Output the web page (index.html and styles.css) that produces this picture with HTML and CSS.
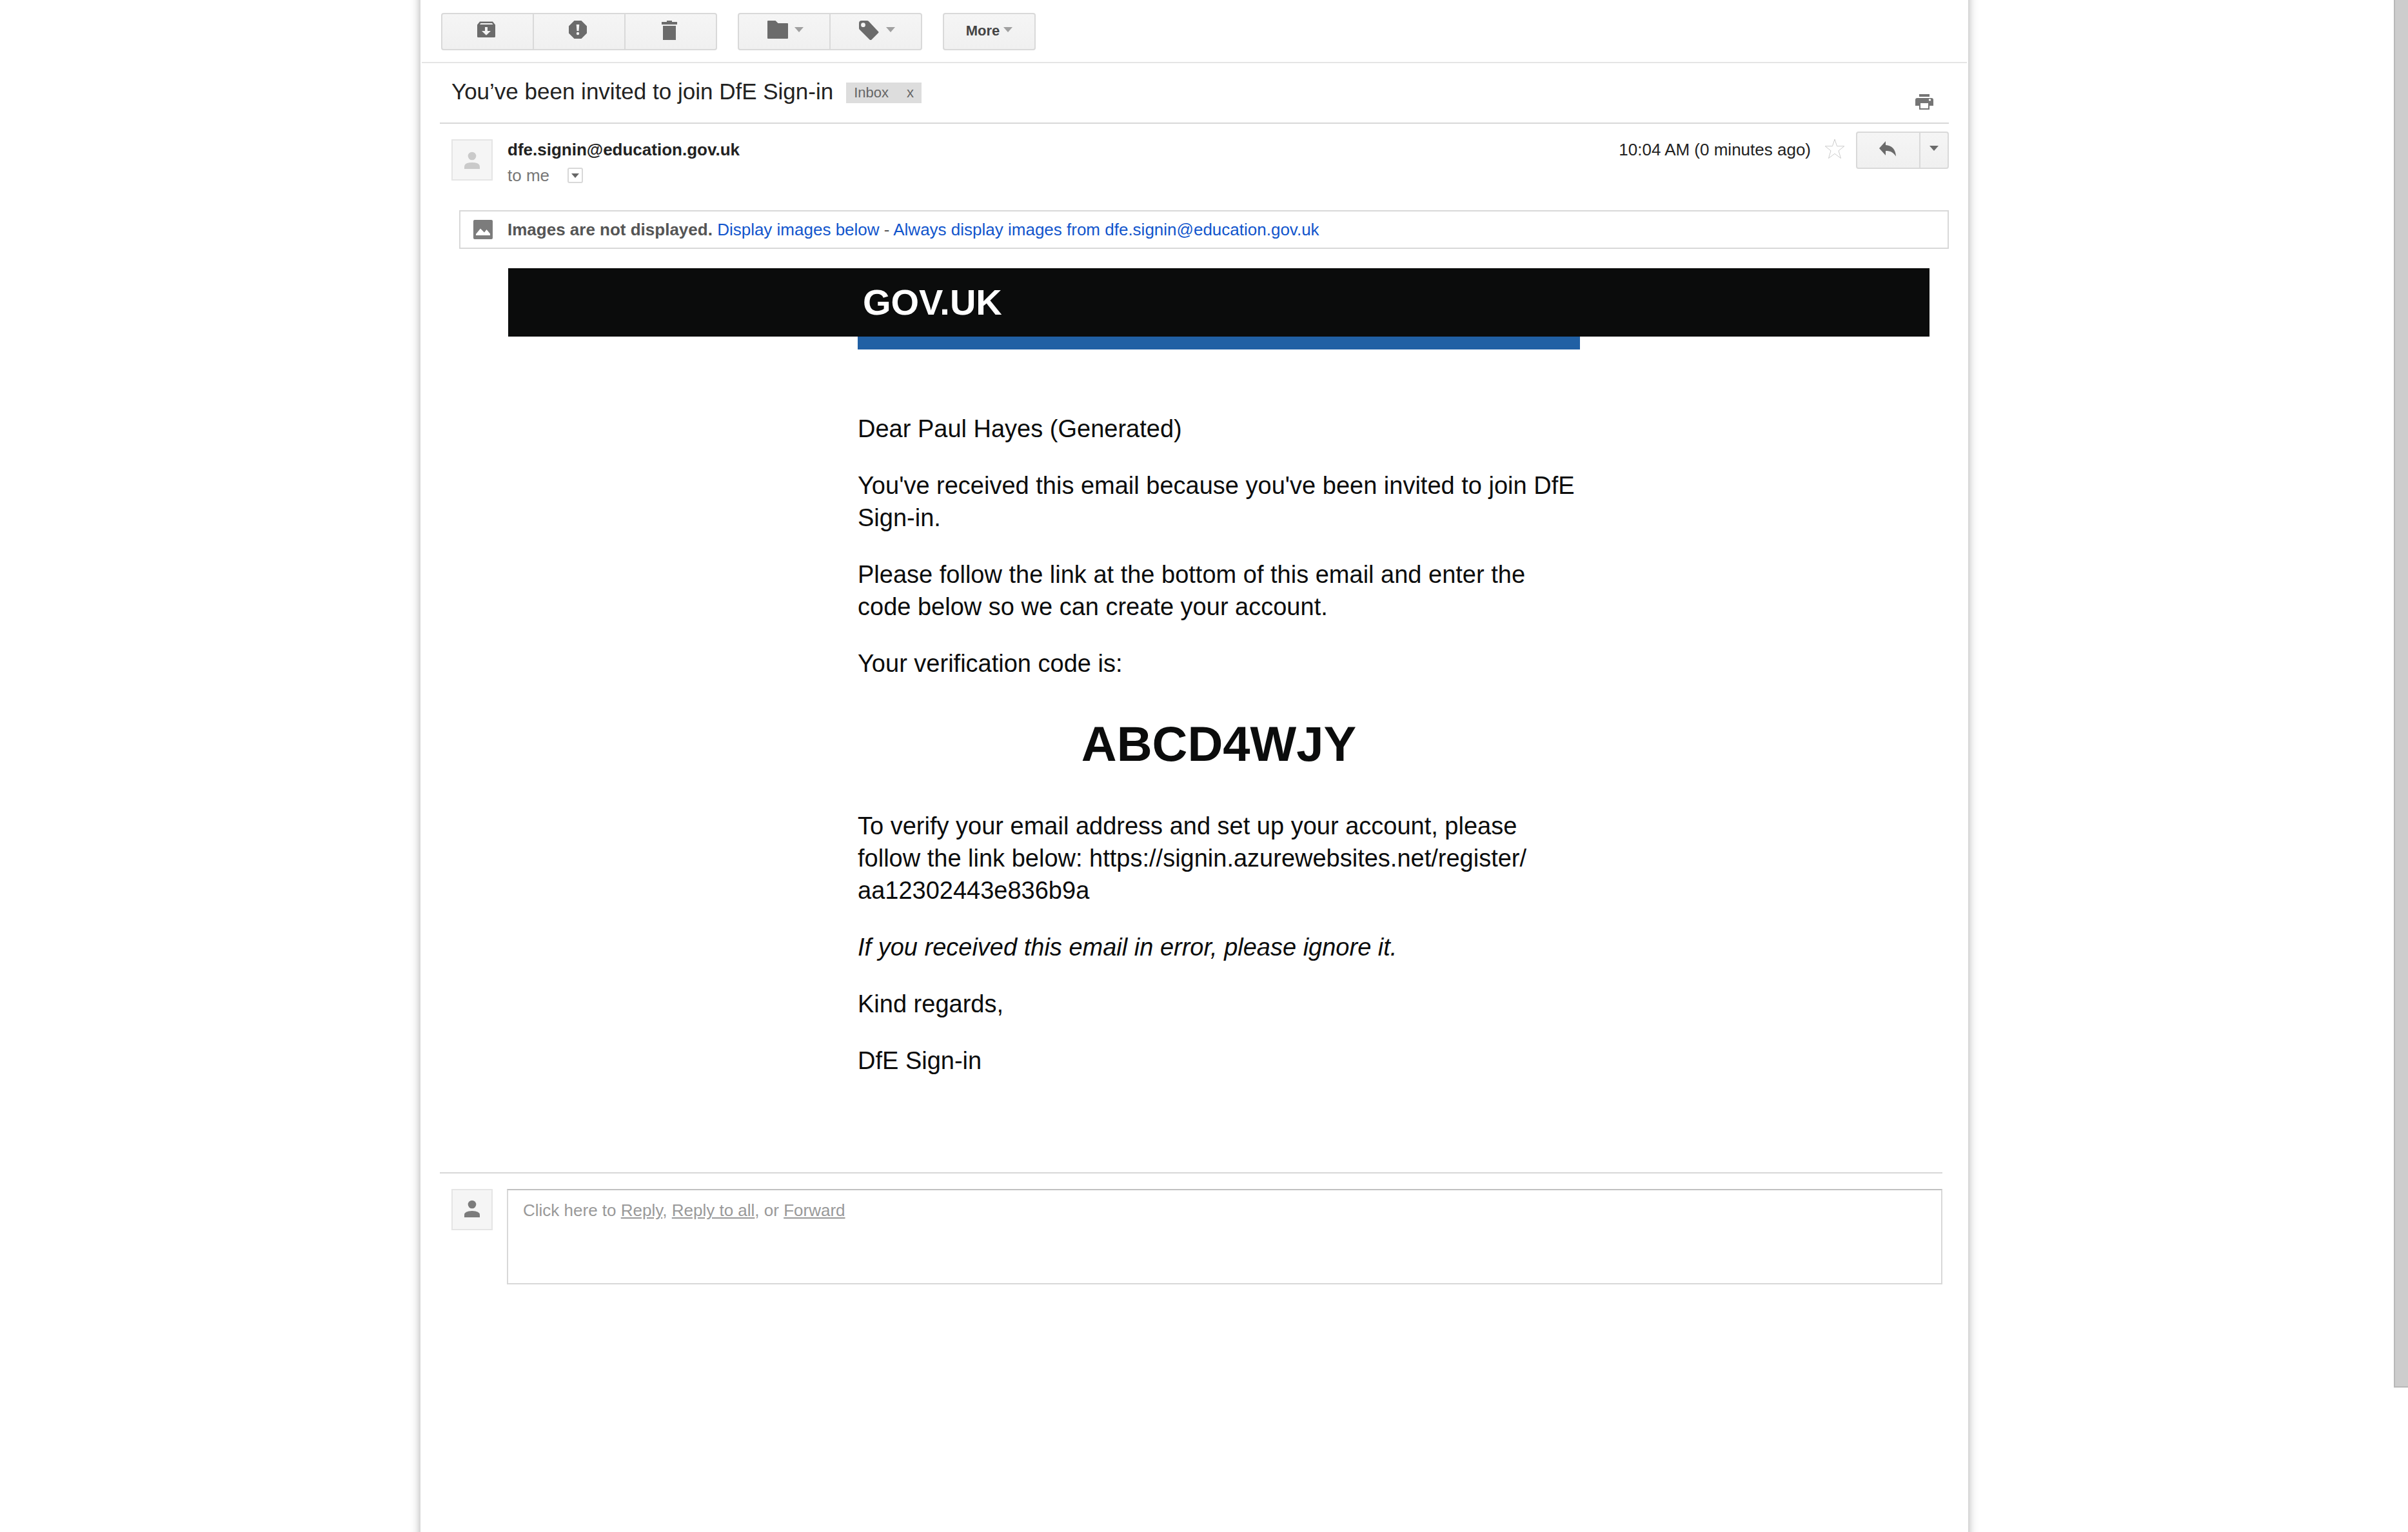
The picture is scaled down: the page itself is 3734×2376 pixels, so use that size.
FILE: index.html
```html
<!DOCTYPE html>
<html lang="en">
<head>
<meta charset="utf-8">
<title>You’ve been invited to join DfE Sign-in</title>
<link rel="stylesheet" href="styles.css">
</head>
<body>
<div class="page">
  <main class="panel">
    <div class="toolbar" role="toolbar" aria-label="Message actions">
      <div class="group">
        <button class="btn btn-icon" aria-label="Archive">
          <svg class="icon" viewBox="0 0 32 32"><path fill-rule="evenodd" d="M6 3.5H26L30 8.500V26.500Q30 28 28.500 28H3.500Q2 28 2 26.500V8.500ZM7.500 6L6 8H26.500L25 6ZM14 12V18H9L16 24.700L23 18H18V12Z"/></svg>
        </button>
        <button class="btn btn-icon" aria-label="Report spam">
          <svg class="icon" viewBox="0 0 32 32"><path fill-rule="evenodd" d="M10.500 2H21.500L30 10.500V21.500L21.500 30H10.500L2 21.500V10.500ZM13.700 8L14.500 18H17.500L18.300 8ZM16 19.800A2.200 2.200 0 1 0 16 24.200A2.200 2.200 0 1 0 16 19.800Z"/></svg>
        </button>
        <button class="btn btn-icon" aria-label="Delete">
          <svg class="icon" viewBox="0 0 32 32"><path d="M12 2H20V4H28V8H4V4H12ZM6 10H26V32H6Z"/></svg>
        </button>
      </div>
      <div class="group">
        <button class="btn btn-menu" aria-label="Move to">
          <svg class="icon" viewBox="0 0 32 32"><path d="M1 2H12.500L16.500 6H31Q32 6 32 7V29Q32 30 31 30H1Q0 30 0 29V3Q0 2 1 2Z"/></svg>
          <svg class="caret" viewBox="0 0 14 8"><path d="M0 0H14L7 8Z"/></svg>
        </button>
        <button class="btn btn-menu" aria-label="Labels">
          <svg class="icon" viewBox="0 0 32 32"><path fill-rule="evenodd" d="M4 2H12.500Q14 2 15 3L30 19Q31 20 30 21L19 32Q18 33 17 32L1 16Q0 15 0 13.500V6Q0 2 4 2ZM6.500 5.300A3.400 3.400 0 1 0 6.500 12.100A3.400 3.400 0 1 0 6.500 5.300Z"/></svg>
          <svg class="caret" viewBox="0 0 14 8"><path d="M0 0H14L7 8Z"/></svg>
        </button>
      </div>
      <button class="btn btn-more">More
        <svg class="caret" viewBox="0 0 14 8"><path d="M0 0H14L7 8Z"/></svg>
      </button>
    </div>

    <article class="thread">
      <header class="subject-row">
        <h1 class="subject">You’ve been invited to join DfE Sign-in</h1>
        <span class="label">Inbox <button class="label-remove" aria-label="Remove label Inbox">x</button></span>
        <button class="print" aria-label="Print">
          <svg class="print-icon" viewBox="0 0 28 24"><path fill-rule="evenodd" d="M6 0H22V4H6ZM3 6H25Q28 6 28 9V18H22V24H6V18H0V9Q0 6 3 6ZM8 14V22H20V14ZM22.500 7.200A1.700 1.700 0 1 0 22.500 10.600A1.700 1.700 0 1 0 22.500 7.200Z"/></svg>
        </button>
      </header>

      <div class="message-head">
        <svg class="avatar avatar-sender" viewBox="0 0 64 64"><rect class="avatar-frame" x="1" y="1" width="62" height="62"/><circle cx="32" cy="26" r="6.300"/><path d="M20 46V42.500Q20 36 32 36Q44 36 44 42.500V46Z"/></svg>
        <div class="sender">
          <strong class="sender-name">dfe.signin@education.gov.uk</strong>
          <div class="recipient">to me
            <button class="details" aria-label="Show details"><svg class="details-caret" viewBox="0 0 12 7"><path d="M0 0H12L6 7Z"/></svg></button>
          </div>
        </div>
        <time class="time">10:04 AM (0 minutes ago)</time>
        <button class="star" aria-label="Star">
          <svg class="star-icon" viewBox="0 0 32 32"><path d="M16 2L19.500 12.700H30.800L22 19.800L25.500 31.500L16 24.300L6.500 31.500L10 19.800L1.200 12.700H12.500Z"/></svg>
        </button>
        <div class="group">
          <button class="btn btn-reply" aria-label="Reply">
            <svg class="reply-icon" viewBox="0 0 26 24"><path d="M0 11L10 0V6C20 6.500 25.500 13 26 23.500C22 17.500 18 15 10 15V22Z"/></svg>
          </button>
          <button class="btn btn-reply-menu" aria-label="More reply options">
            <svg class="caret caret-dark" viewBox="0 0 14 8"><path d="M0 0H14L7 8Z"/></svg>
          </button>
        </div>
      </div>

      <div class="notice">
        <svg class="notice-icon" viewBox="0 0 30 30"><path fill-rule="evenodd" d="M2 0H28Q30 0 30 2V28Q30 30 28 30H2Q0 30 0 28V2Q0 0 2 0ZM4 24H26V21.500L20.500 15L17 19.500L11 13.500L4 22Z"/></svg>
        <p class="notice-text"><strong>Images are not displayed.</strong> <a href="#">Display images below</a> - <a href="#">Always display images from dfe.signin@education.gov.uk</a></p>
      </div>

      <section class="email">
        <div class="brand"><div class="brand-inner">GOV.UK</div></div>
        <div class="email-body">
          <p>Dear Paul Hayes (Generated)</p>
          <p>You've received this email because you've been invited to join DfE Sign-in.</p>
          <p>Please follow the link at the bottom of this email and enter the code below so we can create your account.</p>
          <p>Your verification code is:</p>
          <p class="code">ABCD4WJY</p>
          <p>To verify your email address and set up your account, please follow the link below: https://signin.azurewebsites.net/register/<wbr>aa12302443e836b9a</p>
          <p><em>If you received this email in error, please ignore it.</em></p>
          <p>Kind regards,</p>
          <p>DfE Sign-in</p>
        </div>
      </section>

      <footer class="reply-row">
        <svg class="avatar avatar-me" viewBox="0 0 64 64"><rect class="avatar-frame" x="1" y="1" width="62" height="62"/><circle cx="32" cy="24" r="6.300"/><path d="M20 44V40.500Q20 34 32 34Q44 34 44 40.500V44Z"/></svg>
        <div class="reply-box">Click here to <a href="#">Reply</a>, <a href="#">Reply to all</a>, or <a href="#">Forward</a></div>
      </footer>
    </article>
  </main>
  <div class="scroll-track"><div class="scroll-thumb"></div></div>
</div>
</body>
</html>
```

FILE: styles.css
```css
* { box-sizing: border-box; }

body {
  margin: 0;
  background: #fff;
  color: #222;
  font: 26px/40px "Liberation Sans", Arial, Helvetica, sans-serif;
}

h1, p { margin: 0; font-weight: normal; }

svg { display: block; flex: none; }

button {
  margin: 0;
  padding: 0;
  border: 0;
  background: none;
  color: inherit;
  font: inherit;
  cursor: pointer;
}

.page {
  display: flex;
  height: 100vh;
  overflow: hidden;
}

/* The panel runs past both window edges so its side shadow never fades */
.panel {
  flex: 0 1 2400px;
  min-height: calc(100vh + 80px);
  margin: -40px auto;
  padding-top: 40px;
  background: #fff;
  box-shadow: 0 0 14px rgba(0, 0, 0, 0.34);
}

/* Toolbar */
.toolbar {
  display: flex;
  gap: 32px;
  margin: 0 2px;
  padding: 20px 30px 18px;
  border-bottom: 2px solid #e5e5e5;
}

.group { display: flex; }

.btn {
  display: flex;
  align-items: center;
  justify-content: center;
  width: 144px;
  height: 58px;
  border: 2px solid #d9d9d9;
  border-radius: 4px;
  background: linear-gradient(#f5f5f5, #f0f0f0);
}

.group .btn:not(:first-child) {
  margin-left: -2px;
  border-top-left-radius: 0;
  border-bottom-left-radius: 0;
}

.group .btn:not(:last-child) {
  border-top-right-radius: 0;
  border-bottom-right-radius: 0;
}

.btn-icon { padding: 0 4px 6px 0; }
.btn-menu { gap: 10px; padding: 0 0 6px 4px; }

.btn-more {
  gap: 6px;
  padding-bottom: 2px;
  color: #444;
  font-size: 22px;
  font-weight: bold;
}

.btn-more .caret { margin-bottom: 4px; }

.icon { width: 32px; height: 32px; fill: #6b6b6b; }
.caret { width: 14px; height: 8px; fill: #a0a0a0; }
.caret-dark { fill: #6b6b6b; }

/* Subject */
.thread { margin: 0 30px; }

.subject-row {
  display: flex;
  align-items: flex-start;
  padding: 24px 24px 20px 18px;
  border-bottom: 2px solid #d8d8d8;
}

.subject { font-size: 35px; line-height: 40px; }

.label {
  display: flex;
  gap: 28px;
  margin: 6px 0 0 20px;
  padding: 0 12px;
  background: #ddd;
  color: #666;
  font-size: 22px;
  line-height: 32px;
}

.print { margin: 24px 0 0 auto; }
.print-icon { width: 28px; height: 24px; fill: #757575; }

/* Sender */
.message-head {
  display: flex;
  align-items: flex-start;
  padding: 12px 0 34px 18px;
}

.avatar { width: 64px; height: 64px; }
.avatar-frame { fill: #f5f5f5; stroke: #e5e5e5; stroke-width: 2px; }
.avatar-sender { margin-top: 12px; fill: #cacaca; }
.avatar-me { fill: #7c7c7c; }

.sender { flex: 1; margin: 8px 0 0 23px; }
.sender-name { display: block; }

.recipient {
  display: flex;
  align-items: center;
  gap: 28px;
  color: #777;
}

.details {
  display: flex;
  align-items: center;
  justify-content: center;
  width: 24px;
  height: 24px;
  border: 2px solid #d8d8d8;
  border-radius: 3px;
}

.details-caret { width: 12px; height: 7px; fill: #666; }

.time { margin-top: 8px; }
.star { margin: 10px 17px 0 21px; }
.star-icon { width: 32px; height: 32px; fill: #fff; stroke: #ccc; }

.btn-reply { width: 100px; padding: 0 2px 4px 0; }
.btn-reply-menu { width: 46px; padding-bottom: 6px; }
.reply-icon { width: 26px; height: 24px; fill: #6b6b6b; }

/* Blocked images notice */
.notice {
  display: flex;
  align-items: center;
  gap: 23px;
  margin-left: 30px;
  padding: 8px 20px;
  border: 2px solid #d8d8d8;
  color: #555;
}

.notice-icon { width: 30px; height: 30px; fill: #7c7c7c; }
.notice a { color: #15c; text-decoration: none; }

/* Email */
.email {
  margin: 30px 30px 0 106px;
  color: #0b0c0c;
  font-size: 38px;
  line-height: 50px;
}

.brand {
  background: #0b0c0c;
  color: #fff;
  font-size: 56px;
  font-weight: bold;
  line-height: 106px;
}

.brand-inner {
  max-width: 1120px;
  margin: 0 auto;
  padding: 0 8px;
}

.email-body {
  max-width: 1120px;
  margin: 0 auto;
  padding: 98px 0 148px;
  border-top: 20px solid #2160a4;
}

.email-body p + p { margin-top: 38px; }
.email-body .code { margin-top: 50px; }
.email-body .code + p { margin-top: 52px; }

.code {
  font-size: 76px;
  font-weight: bold;
  line-height: 100px;
  text-align: center;
}

/* Quick reply */
.reply-row {
  display: flex;
  gap: 22px;
  margin-right: 10px;
  padding: 24px 0 0 18px;
  border-top: 2px solid #d8d8d8;
}

.reply-box {
  flex: 1;
  min-height: 148px;
  padding: 11px 23px;
  border: 2px solid #d8d8d8;
  border-top-color: #c0c0c0;
  color: #999;
}

.reply-box a { color: inherit; }

/* Scrollbar */
.scroll-track { flex: none; width: 30px; padding-left: 8px; }

.scroll-thumb {
  height: calc(100vh - 224px);
  border: solid #b8b8b8;
  border-width: 0 0 2px 2px;
  background: #cdcdcd;
}
```
